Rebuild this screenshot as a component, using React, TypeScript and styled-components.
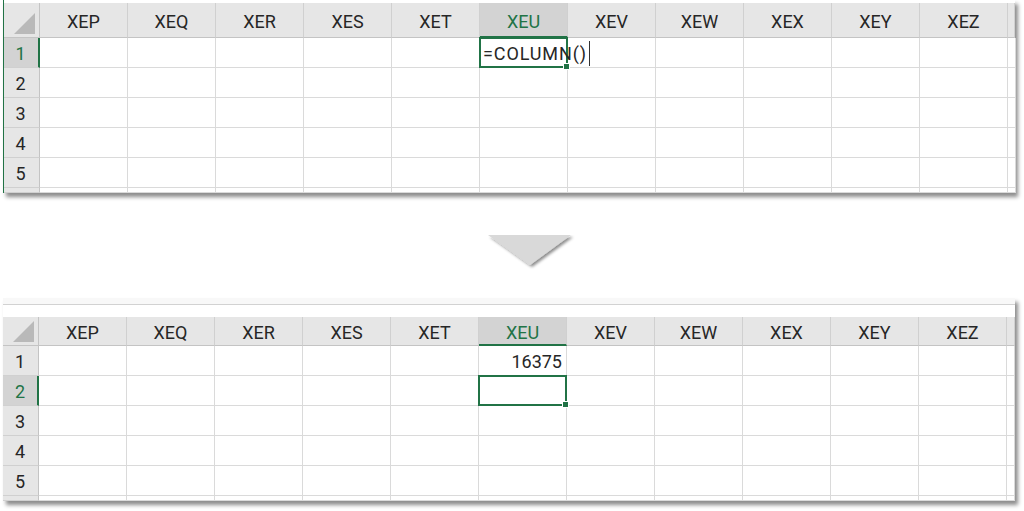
import React from "react";
import styled, { createGlobalStyle, css } from "styled-components";

const GlobalStyle = createGlobalStyle`
  html, body {
    margin: 0;
    padding: 0;
    background: #ffffff;
  }
  body {
    font-family: Roboto, "Liberation Sans", Arial, sans-serif;
  }
`;

const COLUMNS = ["XEP", "XEQ", "XER", "XES", "XET", "XEU", "XEV", "XEW", "XEX", "XEY", "XEZ"];
const ROWS = [1, 2, 3, 4, 5];
const GREEN = "#217346";

const Page = styled.div`
  width: 1024px;
  height: 511px;
  display: flex;
  flex-direction: column;
  padding-left: 3px;
  box-sizing: border-box;
`;

const Panel = styled.div<{ $greenEdge?: boolean }>`
  width: 1012px;
  background: #ffffff;
  box-shadow: 3px 4px 4px rgba(0, 0, 0, 0.45);
  display: flex;
  flex-direction: column;
  position: relative;
  ${(p) =>
    p.$greenEdge &&
    css`
      &::before {
        content: "";
        position: absolute;
        left: 0;
        top: 0;
        bottom: 0;
        width: 1px;
        background: ${GREEN};
        z-index: 3;
      }
    `}
`;

const TopStrip = styled.div<{ $h: number; $line?: boolean }>`
  height: ${(p) => p.$h}px;
  box-sizing: border-box;
  background: #ffffff;
  ${(p) =>
    p.$line &&
    css`
      background: linear-gradient(#f8f8f8 0 6px, #d2d2d2 6px 7px, #ffffff 7px);
    `}
`;

const Grid = styled.div<{ $rh: number; $tail: number; $headH: number }>`
  display: grid;
  grid-template-columns: ${(p) => p.$rh}px repeat(11, 88px) ${(p) => p.$tail}px;
  grid-template-rows: ${(p) => p.$headH}px repeat(5, 30px) 5px;
  font-size: 18px;
  color: #262626;
`;

const HeadCell = styled.div<{ $active?: boolean }>`
  box-sizing: border-box;
  background: ${(p) => (p.$active ? "#d3d3d3" : "#e6e6e6")};
  color: ${(p) => (p.$active ? GREEN : "#262626")};
  border-right: 1px solid #d0d0d0;
  border-bottom: ${(p) => (p.$active ? `2px solid ${GREEN}` : "1px solid #c4c4c4")};
  display: flex;
  align-items: center;
  justify-content: center;
  padding-top: ${(p) => (p.$active ? 3 : 2)}px;
`;

const Corner = styled.div`
  box-sizing: border-box;
  background: #e6e6e6;
  border-right: 1px solid #c4c4c4;
  border-bottom: 1px solid #c4c4c4;
  display: flex;
  align-items: flex-end;
  justify-content: flex-end;
  padding: 0 4px 3px 0;
`;

const CornerMark = styled.div`
  width: 21px;
  height: 21px;
  background: #b9b9b9;
  clip-path: polygon(100% 0, 100% 100%, 0 100%);
`;

const RowHead = styled.div<{ $active?: boolean }>`
  box-sizing: border-box;
  background: ${(p) => (p.$active ? "#d3d3d3" : "#e6e6e6")};
  color: ${(p) => (p.$active ? GREEN : "#262626")};
  border-right: ${(p) => (p.$active ? `2px solid ${GREEN}` : "1px solid #c4c4c4")};
  border-bottom: 1px solid #d0d0d0;
  display: flex;
  align-items: center;
  justify-content: center;
  padding: 2px ${(p) => (p.$active ? 0 : 1)}px 0 0;
`;

const Cell = styled.div<{ $align?: "left" | "right" }>`
  box-sizing: border-box;
  border-right: 1px solid #dadada;
  border-bottom: 1px solid #dadada;
  position: relative;
  display: flex;
  align-items: center;
  justify-content: ${(p) => (p.$align === "right" ? "flex-end" : "flex-start")};
  padding: 2px 4px 0 3px;
  white-space: nowrap;
  overflow: visible;
`;

const EditText = styled.span`
  position: relative;
  z-index: 2;
  letter-spacing: 0.9px;
  padding-right: 2px;
  border-right: 1px solid #333;
  line-height: 25px;
`;

const Selection = styled.div`
  position: absolute;
  left: -1px;
  top: -1px;
  right: -1px;
  bottom: -1px;
  border: 2px solid ${GREEN};
  pointer-events: none;
  z-index: 1;

  &::after {
    content: "";
    position: absolute;
    right: -4px;
    bottom: -4px;
    width: 5px;
    height: 5px;
    background: ${GREEN};
    border: 1px solid #ffffff;
  }
`;

const ArrowRow = styled.div`
  height: 105px;
  box-sizing: border-box;
  padding: 42px 0 0 482px;
`;

interface SheetProps {
  rowHeadWidth: number;
  tail: number;
  headHeight: number;
  stripHeight: number;
  stripLine?: boolean;
  greenEdge?: boolean;
  activeRow: number;
  value: { row: number; text: string; editing?: boolean };
}

const Sheet: React.FC<SheetProps> = ({
  rowHeadWidth,
  tail,
  headHeight,
  stripHeight,
  stripLine,
  greenEdge,
  activeRow,
  value,
}) => {
  const activeCol = "XEU";
  return (
    <Panel $greenEdge={greenEdge}>
      <TopStrip $h={stripHeight} $line={stripLine} />
      <Grid $rh={rowHeadWidth} $tail={tail} $headH={headHeight}>
        <Corner>
          <CornerMark />
        </Corner>
        {COLUMNS.map((c) => (
          <HeadCell key={c} $active={c === activeCol}>
            {c}
          </HeadCell>
        ))}
        <HeadCell />
        {ROWS.map((r) => (
          <React.Fragment key={r}>
            <RowHead $active={r === activeRow}>{r}</RowHead>
            {COLUMNS.map((c) => {
              const isActive = c === activeCol && r === activeRow;
              const hasValue = c === activeCol && r === value.row;
              return (
                <Cell key={c} $align={value.editing ? "left" : "right"}>
                  {hasValue &&
                    (value.editing ? <EditText>{value.text}</EditText> : <span>{value.text}</span>)}
                  {isActive && <Selection />}
                </Cell>
              );
            })}
            <Cell />
          </React.Fragment>
        ))}
        <RowHead />
        {COLUMNS.map((c) => (
          <Cell key={c} />
        ))}
        <Cell />
      </Grid>
    </Panel>
  );
};

const DownArrow: React.FC = () => (
  <svg width="92" height="40" viewBox="0 0 92 40">
    <defs>
      <filter id="arrowShadow" x="-20%" y="-20%" width="140%" height="160%">
        <feDropShadow dx="2" dy="2" stdDeviation="1.4" floodColor="#000" floodOpacity="0.45" />
      </filter>
    </defs>
    <polygon points="3,0 86,0 45,30" fill="#d9d9d9" filter="url(#arrowShadow)" />
  </svg>
);

export default function App() {
  return (
    <>
      <GlobalStyle />
      <Page>
        <Sheet
          rowHeadWidth={37}
          tail={7}
          headHeight={35}
          stripHeight={3}
          greenEdge
          activeRow={1}
          value={{ row: 1, text: "=COLUMN()", editing: true }}
        />
        <ArrowRow>
          <DownArrow />
        </ArrowRow>
        <Sheet
          rowHeadWidth={36}
          tail={8}
          headHeight={29}
          stripHeight={19}
          stripLine
          activeRow={2}
          value={{ row: 1, text: "16375" }}
        />
      </Page>
    </>
  );
}
